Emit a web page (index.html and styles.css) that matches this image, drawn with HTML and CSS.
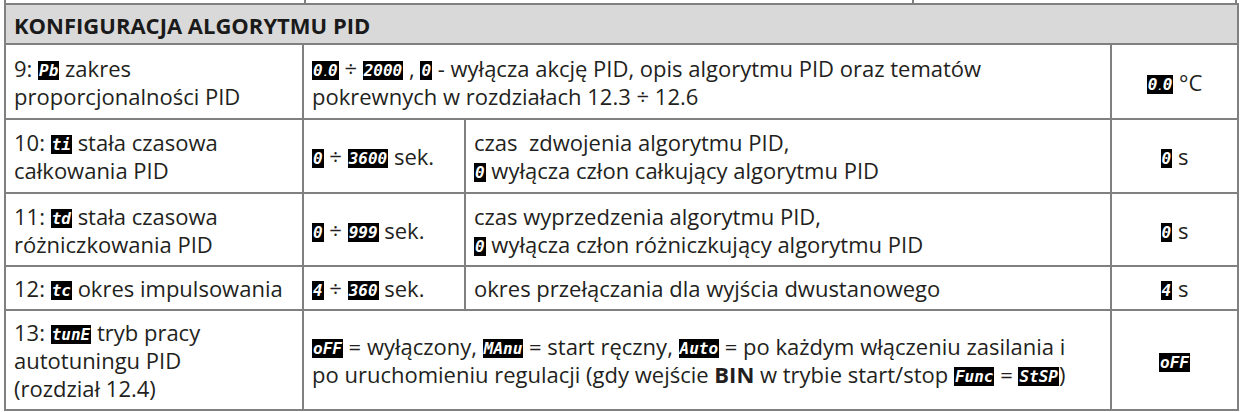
FILE: index.html
```html
<!DOCTYPE html>
<html lang="pl">
<head>
<meta charset="utf-8">
<title>Konfiguracja algorytmu PID</title>
<link rel="stylesheet" href="styles.css">
</head>
<body>
<div class="sheet">
  <div class="prev-row">
    <div class="prev-a"></div>
    <div class="prev-b"></div>
    <div class="prev-c"></div>
  </div>
  <table class="cfg">
    <colgroup>
      <col class="c1"><col class="c2"><col class="c3"><col class="c4">
    </colgroup>
    <tr class="head">
      <th colspan="4">KONFIGURACJA ALGORYTMU PID</th>
    </tr>
    <tr class="r9">
      <td>9: <span class="seg">Pb</span> zakres<br>proporcjonalności PID</td>
      <td colspan="2"><span class="seg">0<span class="dp">.</span>0</span> ÷ <span class="seg">2000</span> , <span class="seg">0</span> - wyłącza akcję PID, opis algorytmu PID oraz tematów<br>pokrewnych w rozdziałach 12.3 ÷ 12.6</td>
      <td class="val"><span class="seg">0<span class="dp">.</span>0</span> °C</td>
    </tr>
    <tr class="r10">
      <td>10: <span class="seg">ti</span> stała czasowa<br>całkowania PID</td>
      <td><span class="seg">0</span> ÷ <span class="seg">3600</span> sek.</td>
      <td>czas&nbsp; zdwojenia algorytmu PID,<br><span class="seg">0</span> wyłącza człon całkujący algorytmu PID</td>
      <td class="val"><span class="seg">0</span> s</td>
    </tr>
    <tr class="r11">
      <td>11: <span class="seg">td</span> stała czasowa<br>różniczkowania PID</td>
      <td><span class="seg">0</span> ÷ <span class="seg">999</span> sek.</td>
      <td>czas wyprzedzenia algorytmu PID,<br><span class="seg">0</span> wyłącza człon różniczkujący algorytmu PID</td>
      <td class="val"><span class="seg">0</span> s</td>
    </tr>
    <tr class="r12">
      <td>12: <span class="seg">tc</span> okres impulsowania</td>
      <td><span class="seg">4</span> ÷ <span class="seg">360</span> sek.</td>
      <td>okres przełączania dla wyjścia dwustanowego</td>
      <td class="val"><span class="seg">4</span> s</td>
    </tr>
    <tr class="r13">
      <td>13: <span class="seg">tunE</span> tryb pracy<br>autotuningu PID<br>(rozdział 12.4)</td>
      <td colspan="2"><span class="seg">oFF</span> = wyłączony, <span class="seg">MAnu</span> = start ręczny, <span class="seg">Auto</span> = po każdym włączeniu zasilania i<br>po uruchomieniu regulacji (gdy wejście <b>BIN</b> w trybie start/stop <span class="seg">Func</span> = <span class="seg">StSP</span>)</td>
      <td class="val"><span class="seg">oFF</span></td>
    </tr>
  </table>
</div>
</body>
</html>
```

FILE: styles.css
```css
html, body {
  margin: 0;
  padding: 0;
  background: #ffffff;
}

body {
  font-family: "Open Sans", Lato, "Liberation Sans", sans-serif;
  color: #231f20;
}

.sheet {
  width: 1233px;
  margin-left: 4px;
}

.prev-row {
  display: flex;
  height: 3px;
}

.prev-a {
  width: 298px;
  border-left: 2px solid #808080;
  border-right: 2px solid #808080;
}

.prev-b {
  width: 606px;
  border-right: 2px solid #808080;
}

.prev-c {
  flex: 1;
  border-right: 2px solid #808080;
}

.cfg {
  width: 1233px;
  border-collapse: collapse;
  table-layout: fixed;
}

.c1 { width: 298px; }
.c2 { width: 162px; }
.c3 { width: 646px; }
.c4 { width: 127px; }

.cfg th,
.cfg td {
  border: 2px solid #808080;
  padding: 0 8px;
  vertical-align: middle;
  font-size: 22px;
  line-height: 28px;
  white-space: nowrap;
  text-align: left;
}

.cfg th {
  background: #d9d9d9;
  font-weight: 700;
  font-size: 22px;
  height: 37px;
  padding-top: 1px;
  color: #1a1a1a;
}

.cfg td.val {
  text-align: center;
}

.r9 td { height: 73px; }
.r10 td { height: 72px; }
.r11 td { height: 71px; }
.r12 td { height: 42px; }
.r13 td { height: 98px; }

.cfg b {
  font-weight: 700;
}

.seg {
  display: inline-block;
  height: 19px;
  background: #000000;
  color: #ffffff;
  font-family: "DejaVu Sans Mono", monospace;
  font-style: italic;
  font-weight: 700;
  font-size: 16px;
  line-height: 19px;
  padding: 0 1px;
  vertical-align: 1px;
  letter-spacing: 0;
}

.seg .dp {
  font-size: 9px;
  line-height: 19px;
}
```
